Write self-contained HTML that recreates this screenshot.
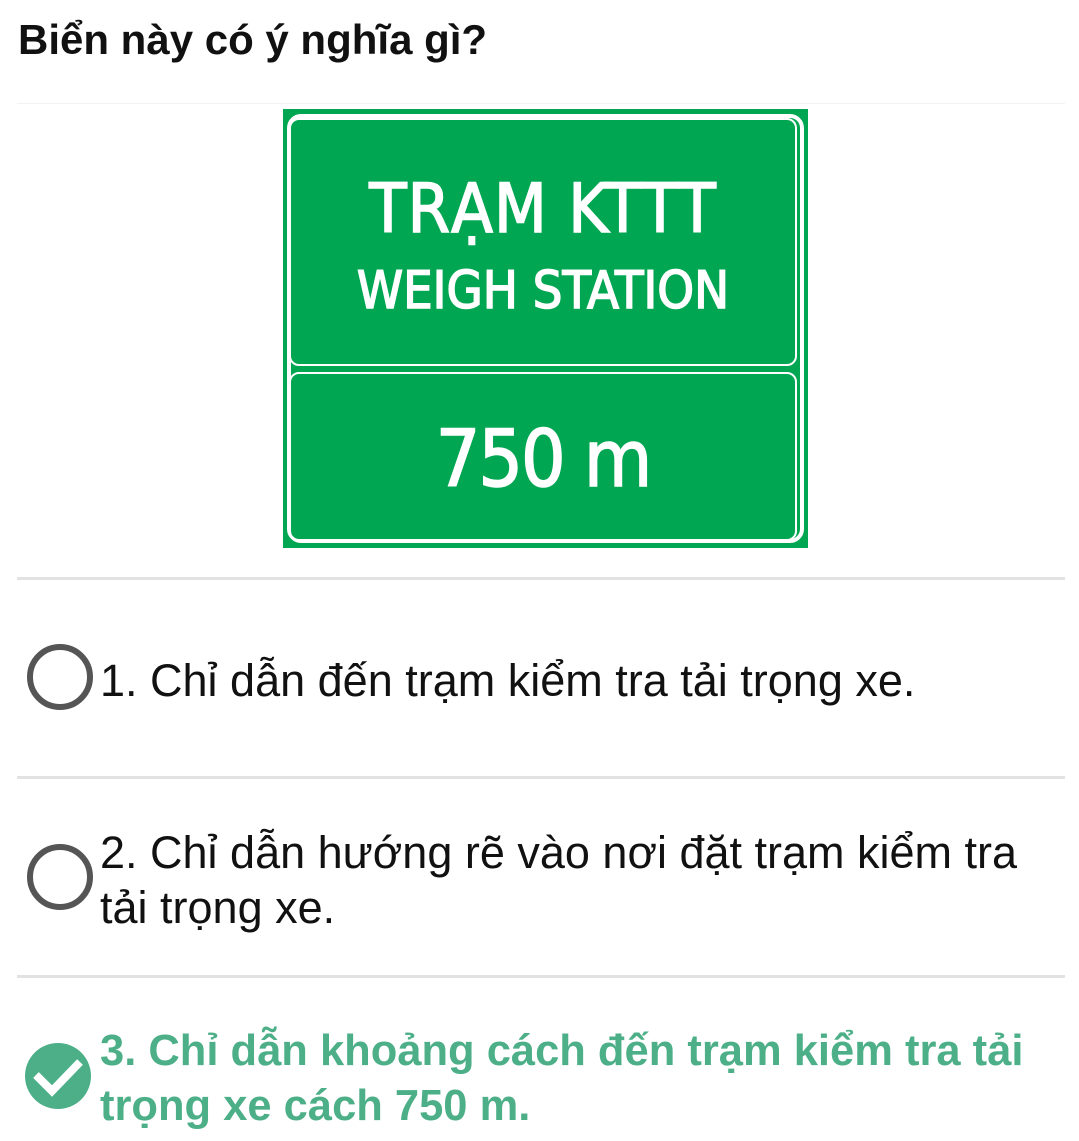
<!DOCTYPE html>
<html><head><meta charset="utf-8"><style>
body{margin:0;width:1079px;height:1141px;background:#fff;font-family:"Liberation Sans",sans-serif;position:relative;overflow:hidden}
.t{position:absolute;left:18px;top:16px;font-size:42px;font-weight:bold;color:#111}
.hr{position:absolute;left:17px;width:1048px;height:3px;background:#e2e2e2}
.o{position:absolute;left:100px;font-size:45px;line-height:55px;color:#111;width:950px}
.r{position:absolute;left:27px;width:54px;height:54px;border:6px solid #555;border-radius:50%}
.sign{position:absolute;left:283px;top:109px;width:525px;height:439px;background:#00a651}
.p{position:absolute;background:#00a651;border:4px solid #fff;border-radius:10px;color:#fff;text-align:center;font-family:"DejaVu Sans Condensed","Liberation Sans Narrow",sans-serif;-webkit-text-stroke:1.5px #fff}
</style></head><body>
<div class="t">Biển này có ý nghĩa gì?</div>
<div class="hr" style="top:103px;height:1px;background:#f2f2f2"></div>
<div class="sign">
<div style="position:absolute;left:4px;top:5px;width:517px;height:429px;border:4px solid #fff;border-radius:14px;box-sizing:border-box"></div>
<div class="p" style="left:6px;top:9px;width:504px;height:244px;border-width:2px">
<div style="font-size:68px;margin-top:55px;line-height:70px;letter-spacing:1px">TRẠM KTTT</div>
<div style="font-size:52px;margin-top:16px;line-height:60px;letter-spacing:0px">WEIGH STATION</div>
</div>
<div class="p" style="left:6px;top:263px;width:504px;height:165px;border-width:2px">
<div style="font-size:78px;margin-top:41px;line-height:90px;letter-spacing:-2px">750 m</div>
</div>
</div>
<div class="hr" style="top:577px"></div>
<div class="r" style="top:644px"></div>
<div class="o" style="top:653px">1. Chỉ dẫn đến trạm kiểm tra tải trọng xe.</div>
<div class="hr" style="top:776px"></div>
<div class="r" style="top:844px"></div>
<div class="o" style="top:825px">2. Chỉ dẫn hướng rẽ vào nơi đặt trạm kiểm tra tải trọng xe.</div>
<div class="hr" style="top:975px"></div>
<svg style="position:absolute;left:24px;top:1042px" width="68" height="68" viewBox="0 0 68 68"><circle cx="34" cy="34" r="33" fill="#4caf88"/><path d="M12 33 L28 49 L56 20" stroke="#fff" stroke-width="8" fill="none"/></svg>
<div class="o" style="top:1024px;color:#4caf88;font-weight:bold;font-size:43.5px">3. Chỉ dẫn khoảng cách đến trạm kiểm tra tải trọng xe cách 750 m.</div>
</body></html>
